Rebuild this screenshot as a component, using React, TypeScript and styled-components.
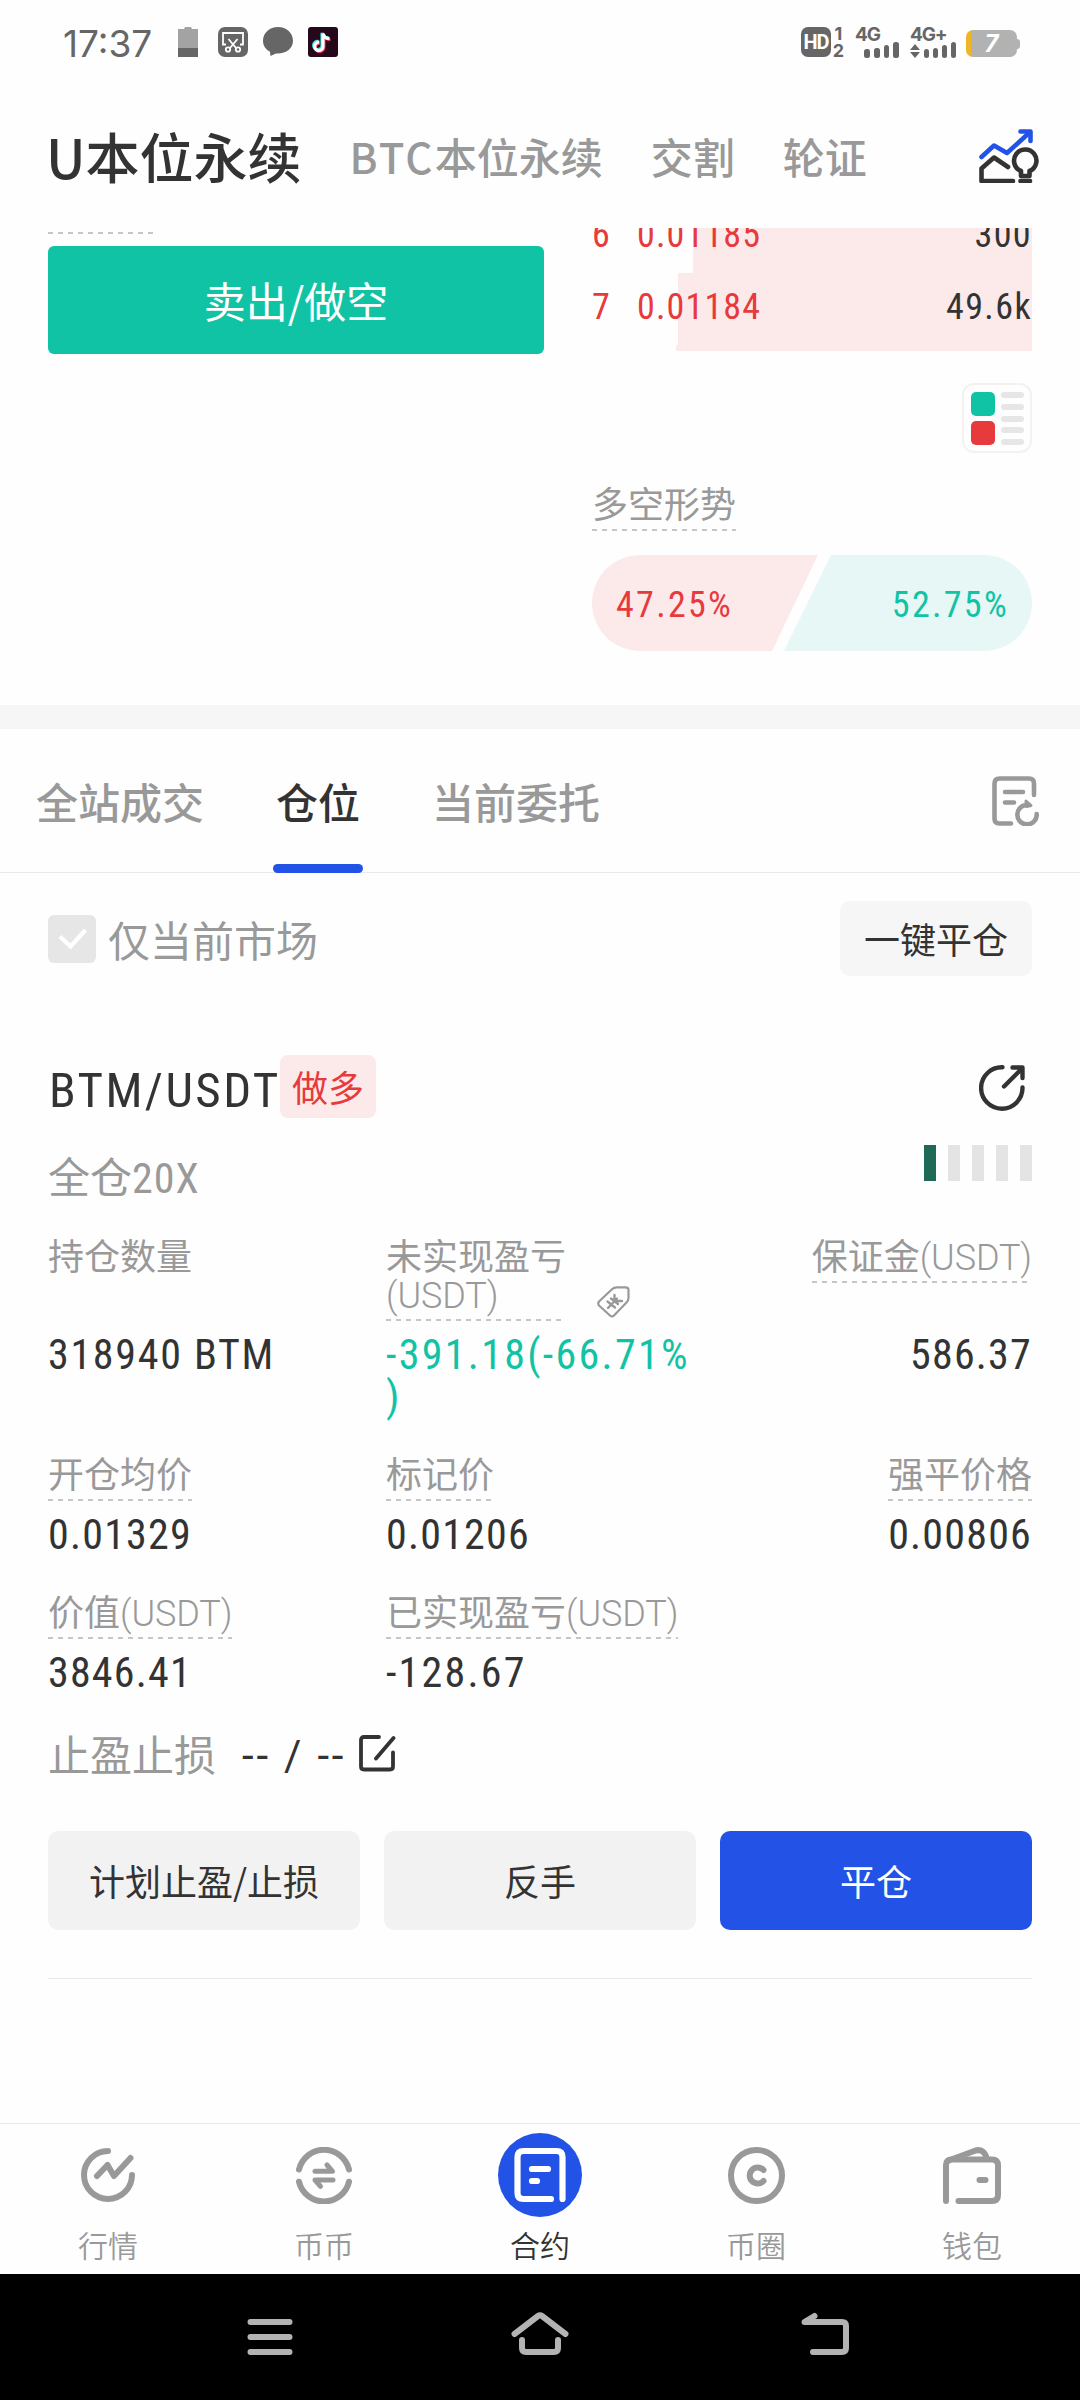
import React from "react";
import styled, { createGlobalStyle } from "styled-components";

const color = {
  ink: "#333333",
  grey: "#999999",
  status: "#666666",
  green: "#11c3a5",
  greenSoft: "#e6f7f5",
  red: "#e73a3c",
  redSoft: "#fceaea",
  blue: "#2253e6",
  line: "#e9e9e9",
};

const cjk = `"Noto Sans CJK SC", "Noto Sans", sans-serif`;
const latin = `Roboto, "Noto Sans CJK SC", sans-serif`;

const GlobalStyle = createGlobalStyle`
  html, body { margin: 0; padding: 0; background: #fff; }
  *, *::before, *::after { box-sizing: border-box; }
  button { border: 0; padding: 0; font: inherit; }
  svg { display: block; flex: none; }
`;

const Screen = styled.div`
  width: 1080px;
  height: 2400px;
  display: flex;
  flex-direction: column;
  overflow: hidden;
  background: #fefefe;
  color: ${color.ink};
  font-family: ${cjk};
  white-space: nowrap;
`;

/* ---------- status bar ---------- */

const StatusBar = styled.header`
  height: 84px;
  flex: none;
  display: flex;
  align-items: center;
  padding: 0 60px 0 63px;
  color: ${color.status};
`;
const Clock = styled.time`
  width: 115px;
  font: 400 37px/40px Inter, sans-serif;
  padding-top: 4px;
`;
const StatusIcons = styled.div`
  display: flex;
  align-items: center;
`;
const NoticeIcons = styled(StatusIcons)`
  gap: 15px;
  flex: 1;
`;
const LevelBattery = styled.div`
  width: 20px;
  height: 30px;
  margin-right: 5px;
  background: linear-gradient(#a3a3a3 21px, #666 21px);
  clip-path: polygon(0 2px, 6px 2px, 7px 0, 13px 0, 14px 2px, 100% 2px, 100% 100%, 0 100%);
`;
const HdBadge = styled.span`
  width: 30px;
  height: 30px;
  border-radius: 7px;
  background: ${color.status};
  color: #fff;
  font: 700 20px/31px Roboto, sans-serif;
  letter-spacing: -1px;
  text-align: center;
`;
const SimNumbers = styled.span`
  display: flex;
  flex-direction: column;
  width: 13px;
  margin: 0 10px 0 1px;
  text-align: center;
  font: 700 18px/17px Inter, sans-serif;
`;
const Signal = styled.div<{ $w: number }>`
  width: ${(p) => p.$w}px;
  height: 30px;
  margin-left: ${(p) => (p.$w > 44 ? 11 : 0)}px;
  display: flex;
  flex-direction: column;
  justify-content: space-between;
`;
const Network = styled.span`
  font: 700 19px/14px Inter, sans-serif;
  letter-spacing: -1.2px;
  padding-top: 1px;
`;
const Bars = styled.div`
  display: flex;
  justify-content: flex-end;
  align-items: flex-end;
  gap: 4px;
  height: 16px;
`;
const Bar = styled.i<{ $h: number }>`
  width: 5.7px;
  height: ${(p) => p.$h}px;
  border-radius: 2.5px;
  background: ${color.status};
`;
const PowerBody = styled.span`
  width: 51px;
  height: 27px;
  margin: 3px 0 0 10px;
  border-radius: 7px;
  background: linear-gradient(90deg, #efb527 5px, #b2b2b2 5px);
  color: #fff;
  font: italic 700 24px/28px Inter, sans-serif;
  text-align: center;
`;
const PowerNub = styled.span`
  width: 3px;
  height: 10px;
  margin-top: 3px;
  border-radius: 0 3px 3px 0;
  background: #b2b2b2;
`;

/* ---------- market header ---------- */

const MarketHeader = styled.nav`
  height: 144px;
  flex: none;
  display: flex;
  align-items: center;
  gap: 48px;
  padding: 0 41px 0 46px;
`;
const MarketTab = styled.span<{ $active?: boolean }>`
  font-size: ${(p) => (p.$active ? 54 : 42)}px;
  line-height: 80px;
  font-weight: 500;
  color: ${(p) => (p.$active ? color.ink : color.grey)};
`;
const Coin = styled.span`
  letter-spacing: 2.2px;
`;
const HeaderAction = styled.span`
  margin-left: auto;
`;

/* ---------- trade panel ---------- */

const TradePanel = styled.section`
  height: 477px;
  flex: none;
  display: grid;
  grid-template-columns: 496px 440px;
  column-gap: 48px;
  padding: 0 48px;
  overflow: hidden;
`;
const OrderForm = styled.div`
  padding-top: 4px;
`;
const dashes = `repeating-linear-gradient(90deg, #c6c6c6 0 5px, transparent 5px 10px)`;
const DashRule = styled.div`
  width: 106px;
  height: 2px;
  background: ${dashes};
`;
const SellButton = styled.button`
  display: block;
  width: 100%;
  height: 108px;
  margin-top: 12px;
  border-radius: 6px;
  background: ${color.green};
  color: #fff;
  font-size: 42px;
  line-height: 108px;
`;
const OrderBook = styled.div`
  display: flex;
  flex-direction: column;
  align-items: flex-start;
`;
const AskList = styled.div`
  width: 100%;
  height: 123px;
  overflow: hidden;
  display: flex;
  flex-direction: column;
  justify-content: flex-end;
`;
const AskRow = styled.div<{ $depth: number; $h?: number }>`
  flex: none;
  height: ${(p) => p.$h ?? 72}px;
  display: flex;
  align-items: center;
  padding-bottom: 4px;
  background: linear-gradient(${color.redSoft}, ${color.redSoft}) right / ${(p) => p.$depth}px 100% no-repeat;
  font: 400 36px/42px ${latin};
  font-stretch: 75%;
  letter-spacing: 1.15px;
  color: ${color.red};
`;
const AskLevel = styled.span`
  width: 45px;
`;
const AskSize = styled.span`
  margin-left: auto;
  color: ${color.ink};
  letter-spacing: 1.4px;
`;
const DepthToggle = styled.div`
  width: 70px;
  height: 70px;
  margin: 32px 0 30px auto;
  border: 2px solid #f5f1f1;
  border-radius: 12px;
  display: flex;
  justify-content: space-between;
  padding: 7px 6px 7px 7px;
`;
const Swatches = styled.div`
  display: grid;
  gap: 5px;
`;
const Swatch = styled.i<{ $fill: string }>`
  width: 24px;
  height: 24px;
  border-radius: 5px;
  background: ${(p) => p.$fill};
`;
const Lines = styled.div`
  display: flex;
  flex-direction: column;
  justify-content: space-between;
  height: 53px;
`;
const Line = styled.i`
  width: 23px;
  height: 6px;
  border-radius: 3px;
  background: #e6e6e6;
`;
const Label = styled.div<{ $dashed?: boolean }>`
  width: max-content;
  padding-bottom: 10px;
  font-size: 36px;
  line-height: 38px;
  color: ${color.grey};
  background: ${(p) => (p.$dashed ? dashes : "none")} left bottom / 100% 2px no-repeat;
`;
const Latin = styled.span`
  font-family: ${latin};
  font-weight: 300;
  line-height: 0;
  letter-spacing: -0.1px;
`;
const Leverage = styled(Latin)`
  font-weight: 400;
  font-stretch: 75%;
  letter-spacing: 1px;
`;
const Ratio = styled.div`
  width: 440px;
  height: 96px;
  margin-top: 24px;
  display: flex;
  border-radius: 48px;
  overflow: hidden;
  font: 400 36px/100px ${latin};
  font-stretch: 75%;
  letter-spacing: 2.3px;
`;
const RatioShort = styled.div`
  width: 226px;
  padding-left: 24px;
  background: ${color.redSoft};
  color: ${color.red};
  clip-path: polygon(0 0, 100% 0, 180px 100%, 0 100%);
`;
const RatioLong = styled.div`
  flex: 1;
  margin-left: -34px;
  padding-right: 23px;
  text-align: right;
  background: ${color.greenSoft};
  color: ${color.green};
  clip-path: polygon(47px 0, 100% 0, 100% 100%, 0 100%);
`;
const Band = styled.div`
  height: 24px;
  flex: none;
  background: #f6f6f6;
`;

/* ---------- position tabs ---------- */

const Tabs = styled.nav`
  height: 144px;
  flex: none;
  display: flex;
  align-items: stretch;
  gap: 66px;
  padding: 0 41px 0 33px;
  box-shadow: inset 0 -1px ${color.line};
`;
const Tab = styled.span<{ $active?: boolean }>`
  padding: 0 3px;
  font-size: 42px;
  font-weight: 500;
  line-height: 144px;
  color: ${(p) => (p.$active ? color.ink : color.grey)};
  display: flex;
  flex-direction: column;
  &::after {
    content: "";
    height: 9px;
    margin: -9px -3px 0;
    border-radius: 5px;
    background: ${(p) => (p.$active ? color.blue : "transparent")};
  }
`;
const TabAction = styled.span`
  margin-left: auto;
  align-self: center;
`;

/* ---------- position list ---------- */

const Positions = styled.main`
  height: 1250px;
  flex: none;
  padding: 28px 48px 0;
`;
const FilterRow = styled.div`
  height: 75px;
  display: flex;
  align-items: center;
`;
const Checkbox = styled.span`
  width: 48px;
  height: 48px;
  margin-right: 12px;
  border-radius: 6px;
  background: #e6e6e6;
`;
const FilterText = styled.span`
  flex: 1;
  font-size: 42px;
  line-height: 60px;
  color: ${color.grey};
`;
const CloseAll = styled.button`
  width: 192px;
  height: 75px;
  border-radius: 10px;
  background: #f6f6f6;
  color: ${color.ink};
  font-size: 36px;
  line-height: 75px;
`;
const TitleRow = styled.div`
  height: 63px;
  margin-top: 79px;
  display: flex;
  align-items: center;
  justify-content: space-between;
  padding-right: 7px;
  & > svg {
    margin-top: 3px;
  }
`;
const TitleGroup = styled.div`
  display: flex;
  align-items: center;
`;
const Symbol = styled.h2`
  width: 232px;
  margin: 0;
  padding: 8px 0 0 1px;
  font: 400 49px/60px ${latin};
  font-stretch: 75%;
  letter-spacing: 2.4px;
`;
const SideTag = styled.span`
  width: 96px;
  height: 63px;
  border-radius: 8px;
  background: ${color.redSoft};
  color: ${color.red};
  font-size: 36px;
  line-height: 63px;
  text-align: center;
`;
const LeverageRow = styled.div`
  height: 60px;
  margin-top: 27px;
  display: flex;
  justify-content: space-between;
  font-size: 42px;
  line-height: 60px;
  color: ${color.grey};
`;
const RiskMeter = styled.div`
  display: flex;
  gap: 12px;
`;
const RiskCell = styled.i<{ $on?: boolean }>`
  width: 12px;
  height: 36px;
  background: ${(p) => (p.$on ? "#1f6a56" : "#e4e4e4")};
`;
const Stats = styled.div`
  margin-top: 30px;
  display: grid;
  gap: 35px;
`;
const StatRow = styled.div`
  display: grid;
  grid-template-columns: 338px 308px 1fr;
  row-gap: 13px;
  & > :nth-child(3n) {
    justify-self: end;
  }
`;
const LabelWithIcon = styled.div`
  display: flex;
  align-items: flex-end;
  gap: 31px;
  & > svg {
    margin-bottom: 3px;
  }
`;
const Value = styled.div<{ $green?: boolean; $track?: number }>`
  font: 400 42px/42px ${latin};
  font-stretch: 75%;
  letter-spacing: ${(p) => p.$track ?? 1.2}px;
  color: ${(p) => (p.$green ? color.green : color.ink)};
`;
const StopRow = styled.div`
  height: 44px;
  margin-top: 37px;
  display: flex;
  align-items: center;
  font-size: 42px;
  line-height: 44px;
  color: ${color.grey};
`;
const StopValue = styled.span`
  width: 117px;
  margin-left: 26px;
  padding-top: 6px;
  font: 400 42px/44px ${latin};
  letter-spacing: 2.8px;
  color: ${color.ink};
`;
const Actions = styled.div`
  margin-top: 56px;
  padding-bottom: 48px;
  display: grid;
  grid-template-columns: repeat(3, 312px);
  gap: 24px;
  border-bottom: 1px solid ${color.line};
`;
const ActionButton = styled.button<{ $primary?: boolean }>`
  height: 99px;
  border-radius: 10px;
  background: ${(p) => (p.$primary ? color.blue : "#f2f2f2")};
  color: ${(p) => (p.$primary ? "#fff" : color.ink)};
  font-size: 36px;
  line-height: 99px;
`;

/* ---------- bottom bars ---------- */

const BottomNav = styled.nav`
  height: 151px;
  flex: none;
  display: grid;
  grid-template-columns: repeat(5, 216px);
  border-top: 1px solid ${color.line};
`;
const NavItem = styled.a<{ $active?: boolean }>`
  display: flex;
  flex-direction: column;
  align-items: center;
  padding-top: 9px;
  color: ${(p) => (p.$active ? color.ink : color.grey)};
  font-size: 30px;
  font-weight: 350;
  line-height: 40px;
`;
const NavIcon = styled.span<{ $active?: boolean }>`
  width: 84px;
  height: 84px;
  margin-bottom: 7px;
  border-radius: 50%;
  display: flex;
  align-items: center;
  justify-content: center;
  background: ${(p) => (p.$active ? color.blue : "transparent")};
`;
const SystemBar = styled.footer`
  flex: 1;
  display: flex;
  padding: 36px 0 0 240px;
  gap: 210px;
  background: #000;
  & > :last-child {
    margin-left: 15px;
  }
`;

/* ---------- icons ---------- */

type StrokeProps = { w: number; h: number; s: number; c?: string; children: React.ReactNode };
const Stroke = ({ w, h, s, c = "currentColor", children }: StrokeProps) => (
  <svg width={w} height={h} viewBox={`0 0 ${w} ${h}`} fill="none" stroke={c} strokeWidth={s} strokeLinecap="round" strokeLinejoin="round">
    {children}
  </svg>
);

const ScreenshotIcon = () => (
  <svg width="30" height="30" viewBox="0 0 30 30">
    <rect width="30" height="30" rx="7" fill="#666" />
    <g fill="none" stroke="#fff" strokeWidth="1.8">
      <path d="M8 17.500H5V6h20v11.500h-3" />
      <path d="M10.500 12l7.500 9M19.500 12l-7.500 9" />
      <circle cx="10" cy="22.500" r="2.200" />
      <circle cx="20" cy="22.500" r="2.200" />
    </g>
  </svg>
);

const ChatIcon = () => (
  <svg width="30" height="30" viewBox="0 0 30 30" fill="#666">
    <path d="M15 0C6.500 0 0 6 0 13.700c0 4.800 2.700 8.800 7 11l.4 4.300 5.600-2.600c9.500.8 17-4.700 17-12.700C30 6 23.500 0 15 0Z" />
  </svg>
);

const note = "M14.200 6.500v12.800a4.200 4.200 0 1 1-3.800-4.200M14.200 6.500c.5 3 3 5 6.500 5";
const MusicIcon = () => (
  <svg width="30" height="30" viewBox="0 0 30 30">
    <rect width="30" height="30" rx="3" fill="#26081b" />
    <g fill="none" strokeWidth="3.200">
      <path d={note} stroke="#ef2a55" transform="translate(1.700 1)" />
      <path d={note} stroke="#35e3e0" transform="translate(-.2 -.8)" />
      <path d={note} stroke="#fff" transform="translate(.8 .1)" />
    </g>
  </svg>
);

const DataArrows = () => (
  <svg width="10" height="14" viewBox="0 0 10 14" fill="#666">
    <path d="M5 0l5 6H0zM5 14l5-6H0z" />
  </svg>
);

const ChartIdeaIcon = () => (
  <Stroke w={60} h={54} s={4.6} c={color.ink}>
    <g stroke={color.blue}>
      <path d="M2.500 28L15 16.500L28 24L50 4" />
      <path d="M41.500 2.500H51.500V12" />
    </g>
    <path d="M34 52H2.500V39.500L15 28.500L29 38" />
    <path d="M42 47V42A11.200 11.200 0 1 1 50.500 42V47Z" />
    <path d="M41.500 52H51" />
  </Stroke>
);

const OrderHistoryIcon = () => (
  <Stroke w={47} h={50} s={4.6} c={color.grey}>
    <path d="M42 19V7.500Q42 2.500 37 2.500H7.500Q2.500 2.500 2.500 7.500V42.500Q2.500 47.500 7.500 47.500H19" />
    <path d="M13 16H31M13 26.500H22" />
    <path d="M35.500 29A9.700 9.700 0 1 0 44.700 38" />
    <path d="M34 25L39 29.500L34.500 30.500Z" fill={color.grey} strokeWidth="3" />
  </Stroke>
);

const CheckIcon = () => (
  <svg width="48" height="48" viewBox="0 0 48 48" fill="none" stroke="#fff" strokeWidth="4.200">
    <path d="M12 21.500L22.500 31.500L37.500 15" />
  </svg>
);

const ShareIcon = () => (
  <Stroke w={46} h={46} s={4.4} c={color.ink}>
    <path d="M23.500 2.300A20.700 20.700 0 1 0 43.500 22.500" />
    <path d="M25 21.500L43 3.500M33.500 2.500H43.500V13" />
  </Stroke>
);

const PriceTagIcon = () => (
  <Stroke w={34} h={32} s={2.2} c={color.grey}>
    <path d="M2 15.500L15 3.200Q17 1.300 20 1.300H28.500Q31.500 1.300 31.500 4V12Q31.500 14.500 29.500 16.500L17 29.500Q15 31.300 13 29.500L2 19.500Q.500 17.500 2 15.500Z" />
    <path d="M11 22L20 12.500M17.500 9V15H25M10.500 15.500L18 21.500M14 12.500L21 18" strokeWidth="2.400" />
  </Stroke>
);

const EditIcon = () => (
  <Stroke w={37} h={37} s={3.8} c={color.ink}>
    <path d="M20 2H5Q2 2 2 5V31.500Q2 34.500 5 34.500H31Q34 34.500 34 31.500V17.500" />
    <path d="M17 23.500L34.500 3" />
  </Stroke>
);

const QuotesIcon = () => (
  <Stroke w={54} h={54} s={6}>
    <path d="M27 3A24 24 0 1 0 51 27" />
    <path d="M16 28L26.500 17L33 28L49.500 10" />
  </Stroke>
);

const SwapIcon = () => (
  <Stroke w={56} h={57} s={6}>
    <path d="M3 22.500A25.700 25.700 0 0 1 53 22.500M3 34.700A25.700 25.700 0 0 0 53 34.700" />
    <path d="M19 24.300H36.500L31 18M37 33H19L24.500 39.300" strokeWidth="5" />
  </Stroke>
);

const ContractIcon = () => (
  <Stroke w={84} h={84} s={6.2} c="#fff">
    <path d="M64.500 66V24Q64.500 18 58.500 18H25.500Q19.500 18 19.500 24V60Q19.500 66 25.500 66H53" />
    <path d="M34 36H50M34 48H39" />
  </Stroke>
);

const CircleIcon = () => (
  <Stroke w={57} h={57} s={6}>
    <circle cx="28.500" cy="28.500" r="25.500" />
    <path d="M35.500 23A8 8 0 1 0 35.500 34" />
  </Stroke>
);

const WalletIcon = () => (
  <Stroke w={58} h={57} s={6}>
    <path d="M3 54V18Q3 12.500 9 12.500H49Q55 12.500 55 18.500V48Q55 54 49 54H15.500" />
    <path d="M5.500 13.500L32 3.700Q41 1 43.500 11" />
    <path d="M36.500 33H42.500" />
  </Stroke>
);

const MenuIcon = () => (
  <Stroke w={60} h={54} s={6} c="#b3b3b3">
    <path d="M10.500 12H49.500M10.500 27H49.500M10.500 42H49.500" />
  </Stroke>
);

const HomeIcon = () => (
  <Stroke w={60} h={54} s={6} c="#b3b3b3">
    <path d="M4.500 24L28 6Q30 4.500 32 6L55.500 24" />
    <path d="M12 30V38Q12 42 16 42H44Q48 42 48 38V30" />
  </Stroke>
);

const BackIcon = () => (
  <Stroke w={60} h={54} s={6} c="#b3b3b3">
    <path d="M18 42H47Q51 42 51 38V16Q51 12 47 12H9.500L19.500 6" />
  </Stroke>
);

/* ---------- data ---------- */

const signalBars = [9, 10, 13, 16];

const navItems = [
  { name: "行情", icon: <QuotesIcon /> },
  { name: "币币", icon: <SwapIcon /> },
  { name: "合约", icon: <ContractIcon />, active: true },
  { name: "币圈", icon: <CircleIcon /> },
  { name: "钱包", icon: <WalletIcon /> },
];

export default function App() {
  return (
    <Screen>
      <GlobalStyle />
      <StatusBar>
        <Clock>17:37</Clock>
        <NoticeIcons>
          <LevelBattery />
          <ScreenshotIcon />
          <ChatIcon />
          <MusicIcon />
        </NoticeIcons>
        <StatusIcons>
          <HdBadge>HD</HdBadge>
          <SimNumbers>
            <span>1</span>
            <span>2</span>
          </SimNumbers>
          <Signal $w={44}>
            <Network>4G</Network>
            <Bars>
              {signalBars.map((h, i) => (
                <Bar key={i} $h={h} />
              ))}
            </Bars>
          </Signal>
          <Signal $w={46}>
            <Network>4G+</Network>
            <Bars>
              <DataArrows />
              {signalBars.map((h, i) => (
                <Bar key={i} $h={h} />
              ))}
            </Bars>
          </Signal>
          <PowerBody>7</PowerBody>
          <PowerNub />
        </StatusIcons>
      </StatusBar>

      <MarketHeader>
        <MarketTab $active>U本位永续</MarketTab>
        <MarketTab>
          <Coin>BTC</Coin>本位永续
        </MarketTab>
        <MarketTab>交割</MarketTab>
        <MarketTab>轮证</MarketTab>
        <HeaderAction>
          <ChartIdeaIcon />
        </HeaderAction>
      </MarketHeader>

      <TradePanel>
        <OrderForm>
          <DashRule />
          <SellButton>卖出/做空</SellButton>
        </OrderForm>
        <OrderBook>
          <AskList>
            <AskRow $depth={339}>
              <AskLevel>6</AskLevel>
              <span>0.01185</span>
              <AskSize>300</AskSize>
            </AskRow>
            <AskRow $depth={354}>
              <AskLevel>7</AskLevel>
              <span>0.01184</span>
              <AskSize>49.6k</AskSize>
            </AskRow>
            <AskRow $depth={356} $h={6} />
          </AskList>
          <DepthToggle>
            <Swatches>
              <Swatch $fill={color.green} />
              <Swatch $fill={color.red} />
            </Swatches>
            <Lines>
              {[0, 1, 2, 3, 4].map((i) => (
                <Line key={i} />
              ))}
            </Lines>
          </DepthToggle>
          <Label $dashed>多空形势</Label>
          <Ratio>
            <RatioShort>47.25%</RatioShort>
            <RatioLong>52.75%</RatioLong>
          </Ratio>
        </OrderBook>
      </TradePanel>

      <Band />

      <Tabs>
        <Tab>全站成交</Tab>
        <Tab $active>仓位</Tab>
        <Tab>当前委托</Tab>
        <TabAction>
          <OrderHistoryIcon />
        </TabAction>
      </Tabs>

      <Positions>
        <FilterRow>
          <Checkbox>
            <CheckIcon />
          </Checkbox>
          <FilterText>仅当前市场</FilterText>
          <CloseAll>一键平仓</CloseAll>
        </FilterRow>

        <TitleRow>
          <TitleGroup>
            <Symbol>BTM/USDT</Symbol>
            <SideTag>做多</SideTag>
          </TitleGroup>
          <ShareIcon />
        </TitleRow>

        <LeverageRow>
          <span>
            全仓<Leverage>20X</Leverage>
          </span>
          <RiskMeter>
            <RiskCell $on />
            <RiskCell />
            <RiskCell />
            <RiskCell />
            <RiskCell />
          </RiskMeter>
        </LeverageRow>

        <Stats>
          <StatRow>
            <Label>持仓数量</Label>
            <LabelWithIcon>
              <Label $dashed>
                未实现盈亏
                <br />
                <Latin>(USDT)</Latin>
              </Label>
              <PriceTagIcon />
            </LabelWithIcon>
            <div>
              <Label $dashed>
                保证金<Latin>(USDT)</Latin>
              </Label>
            </div>
            <Value $track={1.7}>318940 BTM</Value>
            <Value $green $track={2.3}>
              -391.18(-66.71%
              <br />)
            </Value>
            <Value>586.37</Value>
          </StatRow>
          <StatRow>
            <Label $dashed>开仓均价</Label>
            <Label $dashed>标记价</Label>
            <Label $dashed>强平价格</Label>
            <Value>0.01329</Value>
            <Value>0.01206</Value>
            <Value>0.00806</Value>
          </StatRow>
          <StatRow>
            <Label $dashed>
              价值<Latin>(USDT)</Latin>
            </Label>
            <Label $dashed>
              已实现盈亏<Latin>(USDT)</Latin>
            </Label>
            <span />
            <Value>3846.41</Value>
            <Value $track={2.2}>-128.67</Value>
          </StatRow>
        </Stats>

        <StopRow>
          <span>止盈止损</span>
          <StopValue>-- / --</StopValue>
          <EditIcon />
        </StopRow>

        <Actions>
          <ActionButton>计划止盈/止损</ActionButton>
          <ActionButton>反手</ActionButton>
          <ActionButton $primary>平仓</ActionButton>
        </Actions>
      </Positions>

      <BottomNav>
        {navItems.map((item) => (
          <NavItem key={item.name} $active={item.active}>
            <NavIcon $active={item.active}>{item.icon}</NavIcon>
            {item.name}
          </NavItem>
        ))}
      </BottomNav>

      <SystemBar>
        <MenuIcon />
        <HomeIcon />
        <BackIcon />
      </SystemBar>
    </Screen>
  );
}
